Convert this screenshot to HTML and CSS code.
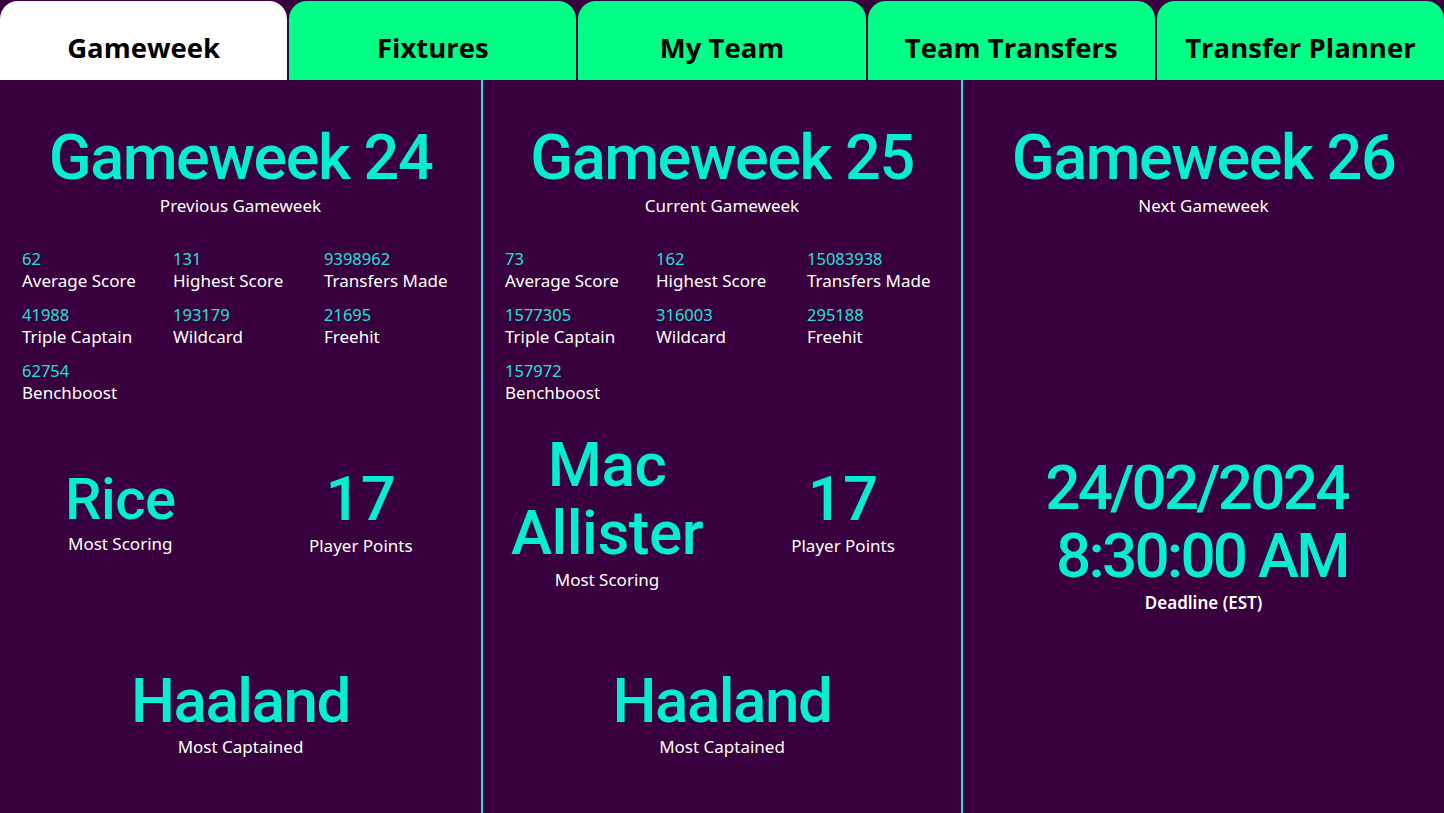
FILE: index.html
```html
<!DOCTYPE html>
<html lang="en">
<head>
  <meta charset="UTF-8" />
  <meta name="viewport" content="width=device-width, initial-scale=1.0" />
  <title>FPL Gameweek Report</title>
  <link rel="stylesheet" href="styles.css">
</head>
<body>
  <div class="report">
    <!-- Page tabs -->
    <nav class="tabs">
      <a class="tab active" href="#gameweek">Gameweek</a>
      <a class="tab" href="#fixtures">Fixtures</a>
      <a class="tab" href="#my-team">My Team</a>
      <a class="tab" href="#team-transfers">Team Transfers</a>
      <a class="tab" href="#transfer-planner">Transfer Planner</a>
    </nav>

    <main class="panels">
      <!-- Previous gameweek -->
      <section class="panel">
        <h2 class="gw-title">Gameweek 24</h2>
        <p class="caption">Previous Gameweek</p>

        <div class="stats">
          <div class="stat"><span class="stat-value">62</span><span class="stat-label">Average Score</span></div>
          <div class="stat"><span class="stat-value">131</span><span class="stat-label">Highest Score</span></div>
          <div class="stat"><span class="stat-value">9398962</span><span class="stat-label">Transfers Made</span></div>
          <div class="stat"><span class="stat-value">41988</span><span class="stat-label">Triple Captain</span></div>
          <div class="stat"><span class="stat-value">193179</span><span class="stat-label">Wildcard</span></div>
          <div class="stat"><span class="stat-value">21695</span><span class="stat-label">Freehit</span></div>
          <div class="stat"><span class="stat-value">62754</span><span class="stat-label">Benchboost</span></div>
        </div>

        <div class="top-player">
          <div class="card">
            <div class="player-name">Rice</div>
            <p class="caption">Most Scoring</p>
          </div>
          <div class="card">
            <div class="points">17</div>
            <p class="caption">Player Points</p>
          </div>
        </div>

        <div class="captain">
          <div class="captain-name">Haaland</div>
          <p class="caption">Most Captained</p>
        </div>
      </section>

      <!-- Current gameweek -->
      <section class="panel">
        <h2 class="gw-title">Gameweek 25</h2>
        <p class="caption">Current Gameweek</p>

        <div class="stats">
          <div class="stat"><span class="stat-value">73</span><span class="stat-label">Average Score</span></div>
          <div class="stat"><span class="stat-value">162</span><span class="stat-label">Highest Score</span></div>
          <div class="stat"><span class="stat-value">15083938</span><span class="stat-label">Transfers Made</span></div>
          <div class="stat"><span class="stat-value">1577305</span><span class="stat-label">Triple Captain</span></div>
          <div class="stat"><span class="stat-value">316003</span><span class="stat-label">Wildcard</span></div>
          <div class="stat"><span class="stat-value">295188</span><span class="stat-label">Freehit</span></div>
          <div class="stat"><span class="stat-value">157972</span><span class="stat-label">Benchboost</span></div>
        </div>

        <div class="top-player shifted">
          <div class="card">
            <div class="player-name two-line">Mac<br>Allister</div>
            <p class="caption">Most Scoring</p>
          </div>
          <div class="card">
            <div class="points">17</div>
            <p class="caption">Player Points</p>
          </div>
        </div>

        <div class="captain">
          <div class="captain-name">Haaland</div>
          <p class="caption">Most Captained</p>
        </div>
      </section>

      <!-- Next gameweek -->
      <section class="panel">
        <h2 class="gw-title">Gameweek 26</h2>
        <p class="caption">Next Gameweek</p>

        <div class="deadline">
          <div class="deadline-time">24/02/2024<br>8:30:00 AM</div>
          <p class="caption strong">Deadline (EST)</p>
        </div>
      </section>
    </main>
  </div>
</body>
</html>
```

FILE: styles.css
```css
/* base */
body {
  margin: 0;
  padding: 0;
  background-color: #38003c;
  font-family: "Noto Sans", "Open Sans", sans-serif;
}

.report {
  width: 1444px;
  height: 813px;
  display: flex;
  flex-direction: column;
  background-color: #38003c;
  overflow: hidden;
}

/* tabs */
.tabs {
  display: flex;
  gap: 2px;
  height: 80px;
  padding-top: 1px;
  box-sizing: border-box;
}

.tab {
  flex: 1;
  background-color: #00ff87;
  border-radius: 18px 18px 0 0;
  color: #000;
  text-decoration: none;
  text-align: center;
  font-family: "Open Sans", "Noto Sans", sans-serif;
  font-weight: 700;
  font-size: 27.5px;
  line-height: 30px;
  padding-top: 32px;
  box-sizing: border-box;
}

.tab.active {
  background-color: #fff;
}

/* panels */
.panels {
  flex: 1;
  display: grid;
  grid-template-columns: 481px 480px 1fr;
}

.panel {
  display: flex;
  flex-direction: column;
  padding-top: 45px;
}

.panel + .panel {
  border-left: 2px solid #1fe0d6;
}

.gw-title,
.player-name,
.points,
.captain-name,
.deadline-time {
  font-family: Roboto, "DejaVu Sans", sans-serif;
  font-weight: 500;
  color: #04efd2;
  text-align: center;
  margin: 0;
}

.gw-title {
  font-size: 63px;
  line-height: 66px;
  letter-spacing: -1.5px;
}

.caption {
  margin: 0;
  color: #fff;
  font-size: 17px;
  line-height: 20px;
  text-align: center;
}

.caption.strong {
  font-weight: 600;
}

.panel > .caption {
  margin-top: 5px;
}

/* stats grid */
.stats {
  display: grid;
  grid-template-columns: 151px 151px 151px;
  row-gap: 12px;
  padding-left: 22px;
  margin-top: 31px;
}

.stat {
  display: flex;
  flex-direction: column;
}

.stat-value {
  color: #1fe0d6;
  font-size: 16.5px;
  line-height: 23px;
}

.stat-label {
  color: #fff;
  font-size: 17px;
  line-height: 21px;
}

/* most scoring */
.top-player {
  display: grid;
  grid-template-columns: 1fr 1fr;
  align-items: center;
  height: 182px;
  margin-top: 16px;
}

.top-player.shifted {
  padding-left: 6px;
}

.card {
  display: flex;
  flex-direction: column;
  align-items: center;
}

.card .caption {
  margin-top: 3px;
}

.player-name {
  font-size: 58px;
  line-height: 64px;
  letter-spacing: -0.5px;
}

.player-name.two-line {
  font-size: 62px;
  line-height: 68px;
}

.points {
  font-size: 62px;
  line-height: 68px;
}

/* most captained */
.captain {
  margin-top: 67px;
}

.captain-name {
  font-size: 62px;
  line-height: 66px;
  letter-spacing: -1.5px;
}

.captain .caption {
  margin-top: 3px;
}

/* deadline */
.deadline {
  display: flex;
  flex-direction: column;
  align-items: center;
  margin-top: 238px;
  padding-right: 14px;
}

.deadline-time {
  font-size: 62px;
  line-height: 68px;
  letter-spacing: -2.8px;
  text-align: right;
}

.deadline .caption {
  padding-left: 14px;
  margin-top: 3px;
}
```
